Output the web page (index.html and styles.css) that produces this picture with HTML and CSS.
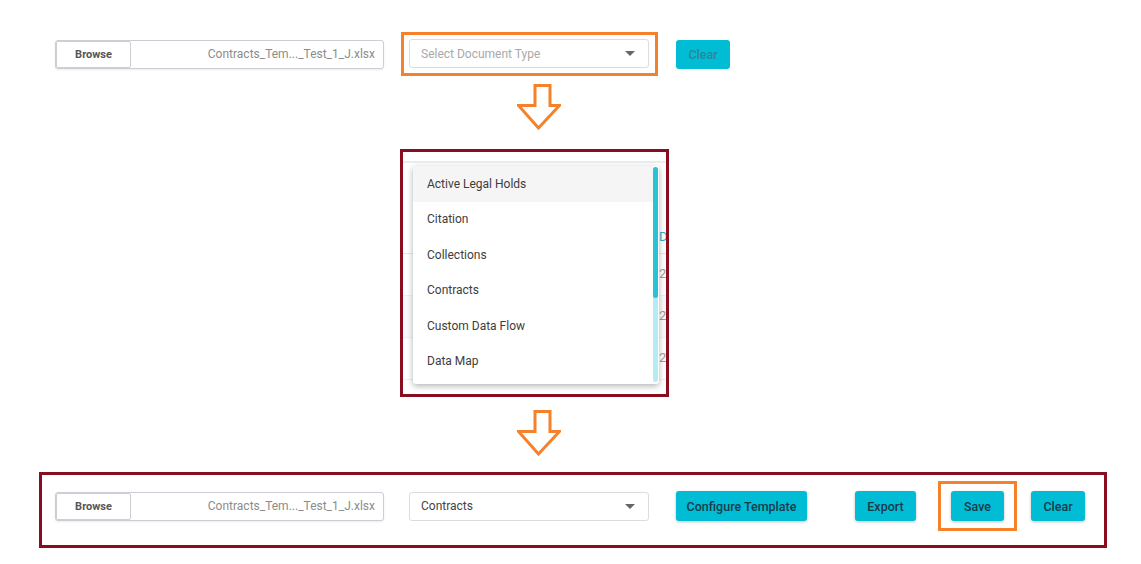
FILE: index.html
```html
<!DOCTYPE html>
<html lang="en">
<head>
    <meta charset="UTF-8">
    <title>Document Type Selection</title>
    <link rel="stylesheet" href="styles.css">
</head>
<body>

    <div class="figure">
        <!-- Step 1: file chosen, no type yet -->
        <div class="row row-top">
            <div class="file-input">
                <span class="browse">Browse</span>
                <span class="file-name">Contracts_Tem..._Test_1_J.xlsx</span>
            </div>
            <div class="highlight highlight-select">
                <div class="select placeholder">
                    <span>Select Document Type</span>
                    <span class="caret"></span>
                </div>
            </div>
            <button class="btn btn-disabled btn-clear-top">Clear</button>
        </div>

        <svg class="arrow" width="44" height="46" viewBox="0 0 44 46">
            <polygon points="18,1.5 33,1.5 33,21.5 42.5,21.5 21.5,44 1.5,21.5 18,21.5"
                     fill="#fff" stroke="#f5822a" stroke-width="3" stroke-linejoin="miter"/>
        </svg>

        <!-- Step 2: the open list -->
        <div class="shot">
            <div class="shot-bg">
                <div class="bg-top"></div>
                <div class="bg-head"><span class="bg-cell head-cell">D</span></div>
                <div class="bg-row"><span class="bg-cell">2</span></div>
                <div class="bg-row alt"><span class="bg-cell">2</span></div>
                <div class="bg-row"><span class="bg-cell">2</span></div>
            </div>
            <div class="menu">
                <ul class="menu-list">
                    <li class="active">Active Legal Holds</li>
                    <li>Citation</li>
                    <li>Collections</li>
                    <li>Contracts</li>
                    <li>Custom Data Flow</li>
                    <li>Data Map</li>
                </ul>
                <div class="scrollbar"><div class="scroll-thumb"></div></div>
            </div>
        </div>

        <svg class="arrow arrow-2" width="44" height="46" viewBox="0 0 44 46">
            <polygon points="18,1.5 33,1.5 33,21.5 42.5,21.5 21.5,44 1.5,21.5 18,21.5"
                     fill="#fff" stroke="#f5822a" stroke-width="3" stroke-linejoin="miter"/>
        </svg>

        <!-- Step 3: type chosen, actions available -->
        <div class="final">
            <div class="file-input">
                <span class="browse">Browse</span>
                <span class="file-name">Contracts_Tem..._Test_1_J.xlsx</span>
            </div>
            <div class="select select-final">
                <span>Contracts</span>
                <span class="caret"></span>
            </div>
            <button class="btn btn-configure">Configure Template</button>
            <button class="btn btn-export">Export</button>
            <div class="highlight highlight-save">
                <button class="btn btn-save">Save</button>
            </div>
            <button class="btn btn-clear">Clear</button>
        </div>
    </div>

</body>
</html>
```

FILE: styles.css
```css
body {
    font-family: Roboto, "Liberation Sans", sans-serif;
    background-color: #fff;
    margin: 0;
    padding: 0;
}
.figure {
    display: flex;
    flex-direction: column;
    align-items: flex-start;
}
.row {
    display: flex;
    align-items: center;
}
.row-top {
    margin-top: 32px;
    margin-left: 55px;
}

/* file picker */
.file-input {
    display: flex;
    align-items: stretch;
    box-sizing: border-box;
    width: 329px;
    height: 29px;
    border: 1px solid #c9cfd5;
    border-radius: 3px;
    box-shadow: 0 1px 2px rgba(0, 0, 0, 0.08);
    background-color: #fff;
}
.browse {
    display: flex;
    align-items: center;
    justify-content: center;
    width: 73px;
    border: 1px solid #cfcfcf;
    border-radius: 2px;
    font-size: 11px;
    font-weight: bold;
    color: #555;
}
.file-name {
    flex: 1;
    display: flex;
    align-items: center;
    justify-content: flex-end;
    padding-right: 8px;
    font-size: 12px;
    color: #8c8c8c;
}

/* select */
.select {
    display: flex;
    align-items: center;
    justify-content: space-between;
    box-sizing: border-box;
    width: 240px;
    height: 29px;
    padding: 0 13px 0 11px;
    border: 1px solid #dcdcdc;
    border-radius: 3px;
    font-size: 12px;
    color: #444;
    background-color: #fff;
}
.select.placeholder {
    color: #a9a9a9;
}
.caret {
    width: 0;
    height: 0;
    border-left: 5px solid transparent;
    border-right: 5px solid transparent;
    border-top: 5px solid #666;
}

.highlight {
    border: 3px solid #f5822a;
}
.highlight-select {
    margin-left: 17px;
    padding: 4px 6px 5px 5px;
}

/* buttons */
.btn {
    box-sizing: border-box;
    height: 30px;
    padding: 0;
    border: none;
    border-radius: 3px;
    background-color: #00bcd4;
    color: #1b3a4a;
    font-family: Roboto, "Liberation Sans", sans-serif;
    font-size: 12.5px;
    font-weight: 500;
    box-shadow: 0 1px 3px rgba(0, 0, 0, 0.25);
    cursor: pointer;
}
.btn-disabled {
    color: #27899a;
    box-shadow: none;
    cursor: default;
}
.btn-clear-top {
    margin-left: 18px;
    width: 54px;
    height: 29px;
}

.arrow {
    display: block;
    margin-top: 8px;
    margin-left: 517px;
}
.arrow-2 {
    margin-top: 13px;
}

/* screenshot of the open dropdown */
.shot {
    position: relative;
    box-sizing: border-box;
    width: 269px;
    height: 248px;
    margin-top: 19px;
    margin-left: 400px;
    border: 3px solid #8a0d1f;
    overflow: hidden;
}
.shot-bg {
    display: flex;
    flex-direction: column;
}
.bg-top {
    height: 9px;
    border-bottom: 2px solid #ececec;
    margin-bottom: 50px;
}
.bg-head,
.bg-row {
    position: relative;
    height: 40px;
    border-bottom: 1px solid #e6e6e6;
}
.bg-row {
    height: 41px;
    border-bottom: 1px solid #f0f0f0;
}
.bg-row.alt {
    background-color: #fafafa;
}
.bg-cell {
    position: absolute;
    left: 256px;
    top: 12px;
    font-size: 13px;
    color: #9a9a9a;
}
.head-cell {
    top: 16px;
    color: #26b5c9;
}

.menu {
    position: absolute;
    top: 14px;
    left: 10px;
    width: 246px;
    height: 218px;
    background-color: #fff;
    border-radius: 3px;
    box-shadow: 0 2px 6px rgba(0, 0, 0, 0.3);
    display: flex;
    overflow: hidden;
}
.menu-list {
    flex: 1;
    list-style: none;
    margin: 0;
    padding: 0;
}
.menu-list li {
    display: flex;
    align-items: center;
    height: 35.5px;
    padding-left: 14px;
    font-size: 12px;
    color: #3d3d3d;
}
.menu-list li.active {
    background-color: #f5f5f5;
}
.scrollbar {
    width: 5px;
    margin: 1px 1px 2px 0;
    border-radius: 3px;
    background-color: #b5ebf2;
    display: flex;
    flex-direction: column;
}
.scroll-thumb {
    height: 131px;
    border-radius: 3px;
    background-color: #29c3d9;
}

/* final state */
.final {
    display: flex;
    align-items: center;
    box-sizing: border-box;
    width: 1068px;
    height: 76px;
    margin-top: 16px;
    margin-left: 39px;
    padding: 6px 0 14px 13px;
    border: 3px solid #8a0d1f;
}
.select-final {
    margin-left: 25px;
}
.btn-configure {
    margin-left: 27px;
    width: 131px;
}
.btn-export {
    margin-left: 48px;
    width: 61px;
}
.highlight-save {
    margin-left: 22px;
    padding: 7px 10px 7px 10px;
}
.btn-save {
    width: 53px;
    display: block;
}
.btn-clear {
    margin-left: 14px;
    width: 54px;
}
```
